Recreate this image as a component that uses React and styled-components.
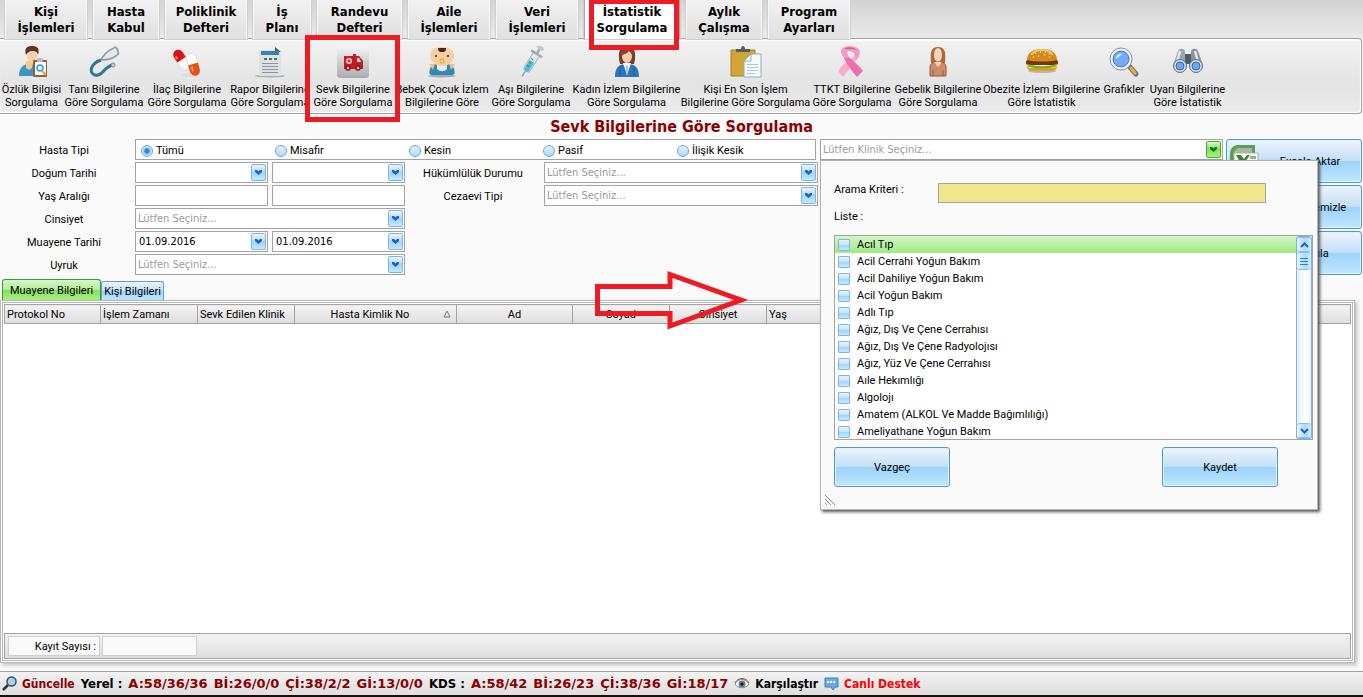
import { useState } from 'react'
import styled, { createGlobalStyle, css } from 'styled-components'

const Global = createGlobalStyle`
* {
box-sizing: border-box;
}
body {
margin: 0;
background: #fafafa;
color: #000;
font-family: Roboto, Tahoma, sans-serif;
font-size: 11px;
}
button, input, select {
font: inherit;
color: inherit;
margin: 0;
padding: 0;
}
`

const wideFont = '"DejaVu Sans Condensed", "DejaVu Sans", Tahoma, sans-serif'

const blueGlass = css`
background: linear-gradient(#eef3fb, #c3dff8 49%, #9cd2fb 51%, #bfe8ff);
`

const Page = styled.div`
position: relative;
display: flex;
flex-direction: column;
min-height: 100vh;
`

/* top tabs */
const TabBar = styled.nav`
display: flex;
align-items: stretch;
gap: 6px;
height: 39px;
padding: 0 5px;
background: linear-gradient(#d3d3d3, #eaeaea);
`
const MainTab = styled.button`
position: relative;
width: ${p => p.$width}px;
border: 1px solid ${p => p.$active ? '#a8a8a8' : '#f6f6f6'};
border-top: none;
border-bottom: none;
outline: 1px solid #cfcfcf;
background: ${p => p.$active ? '#fff' : 'linear-gradient(#f2f2f2, #dfdfdf)'};
font-family: ${wideFont};
font-size: 13px;
font-weight: bold;
line-height: 16px;
text-align: center;
white-space: pre-line;
z-index: ${p => p.$active ? 2 : 0};
`
const RedFrame = styled.span`
position: absolute;
inset: ${p => p.$inset};
border: 5px solid #ed1c24;
pointer-events: none;
z-index: 3;
`

/* icon ribbon */
const Ribbon = styled.div`
display: flex;
gap: 7px;
height: 76px;
margin: -1px 1px 0 0;
padding: 7px 4px 0;
border: 1px solid #a0a0a0;
border-left: none;
border-radius: 0 4px 4px 0;
box-shadow: inset 0 2px 1px #fff, inset -1px -1px 1px #fff;
background: linear-gradient(#f2f2f2, #e4e4e4 60%, #ebebeb);
`
const RibbonButton = styled.button`
position: relative;
display: flex;
flex-direction: column;
align-items: center;
gap: 5px;
width: ${p => p.$width}px;
border: none;
background: none;
line-height: 13px;
white-space: pre;
svg {
flex: none;
}
`

/* filter form */
const Title = styled.h1`
margin: 0;
padding-top: 4px;
height: 25px;
color: #8b0000;
font-family: ${wideFont};
font-size: 16px;
line-height: 18px;
text-align: center;
`
const Filters = styled.form`
display: flex;
align-items: flex-start;
gap: 3px;
height: 139px;
padding-right: 1px;
`
const Fields = styled.div`
display: grid;
grid-template-columns: 131px 133px 133px 131px 274px;
grid-auto-rows: 21px;
column-gap: 4px;
row-gap: 2px;
margin-right: -1px;
`
const Label = styled.label`
display: flex;
align-items: center;
justify-content: center;
padding: 2px 3px 0 0;
grid-column: ${p => p.$col || 1};
`
const Box = styled.div`
display: flex;
align-items: center;
grid-column: ${p => p.$span || 'auto'};
min-width: 0;
height: 21px;
padding-right: 1px;
border: 1px solid #a3a3a3;
background: #fff;
`
const RadioGroup = styled(Box)`
margin-right: 2px;
label {
display: flex;
align-items: center;
gap: 3px;
width: 134px;
padding: 2px 0 0 5px;
}
`
const Radio = styled.input`
appearance: none;
width: 12px;
height: 12px;
border: 1px solid #6aa5e0;
border-radius: 50%;
background: linear-gradient(#e3effb, #aedcff);
&:checked {
background: radial-gradient(#2f86d8 0 2px, #8fc4f2 3px, #e0f0fd 5px);
}
`
const TextInput = styled.input`
flex: 1;
min-width: 0;
width: 100%;
height: 19px;
padding: 0 3px;
border: none;
background: transparent;
font-family: ${wideFont};
outline: none;
`
const Select = styled.select`
flex: 1;
min-width: 0;
height: 19px;
padding: 0 2px;
border: none;
background: transparent;
appearance: none;
font-family: ${wideFont};
outline: none;
color: #9a9a9a;
`
const DropButton = styled.button`
display: flex;
align-items: center;
justify-content: center;
flex: none;
width: 15px;
height: 17px;
border: 1px solid ${p => p.$green ? '#3fae2a' : '#7db4ea'};
border-radius: 2px;
background: ${p => p.$green ? 'linear-gradient(#dcf8cf, #7fe05a 50%, #a5f47c)' : 'linear-gradient(#eef5fd, #a3d5fc 55%, #c4ebff)'};
`
const Clinic = styled.div`
position: relative;
flex: 1;
`
const Actions = styled.div`
display: flex;
flex-direction: column;
gap: 2px;
width: 136px;
`
const GlassButton = styled.button`
display: flex;
align-items: center;
justify-content: center;
width: ${p => p.$width || '100%'};
height: ${p => p.$height || 44}px;
border: 1px solid #4f96dc;
border-radius: 3px;
box-shadow: inset 0 0 0 1px #e2f3ff;
${blueGlass}
`
const ActionButton = styled(GlassButton)`
justify-content: flex-start;
padding-left: 3px;
span {
flex: 1;
text-align: center;
}
`

/* clinic drop down */
const Popup = styled.div`
position: absolute;
top: 21px;
left: 0;
width: 498px;
height: 350px;
padding: 22px 4px 0 13px;
border: 1px solid #b5b5b5;
background: #fafafa;
box-shadow: 2px 2px 3px #555;
z-index: 5;
`
const SearchRow = styled.div`
display: flex;
label {
width: 104px;
}
`
const SearchInput = styled.input`
width: 328px;
height: 20px;
border: 1px solid #a3a3a3;
background: #f0e68c;
`
const ListTitle = styled.div`
height: 32px;
padding-top: 7px;
line-height: 13px;
`
const ListFrame = styled.div`
display: flex;
height: 205px;
border: 1px solid #a3a3a3;
background: #fff;
`
const ClinicList = styled.ul`
flex: 1;
margin: 0;
padding: 0;
list-style: none;
overflow: hidden;
`
const ClinicItem = styled.li`
label {
display: flex;
align-items: center;
gap: 7px;
height: 17px;
padding-left: 3px;
background: ${p => p.$active ? 'linear-gradient(#d5f6c8, #a1e980)' : 'none'};
}
`
const Check = styled.input`
appearance: none;
width: 12px;
height: 12px;
border: 1px solid #7fb4e8;
border-radius: 1px;
background: linear-gradient(#eaf3fc, #c5e3fb 50%, #9fd7fe 55%, #c4ebff);
`
const ScrollBar = styled.div`
display: flex;
flex-direction: column;
width: 16px;
border: 1px solid #7db4ea;
border-radius: 2px;
background: linear-gradient(90deg, #e0eefb, #fff 60%, #edf6fe);
`
const ScrollPart = styled.button`
display: flex;
align-items: center;
justify-content: center;
height: ${p => p.$height}px;
margin-top: ${p => p.$push ? 'auto' : '0'};
border: 1px solid #8cbdf0;
border-width: 1px 0;
border-radius: 3px;
background: linear-gradient(90deg, #eef6fe, #a9dafe 60%, #d2efff);
`
const PopupButtons = styled.div`
display: flex;
justify-content: space-between;
padding: 7px 35px 7px 0;
`
const Grip = styled.svg`
display: block;
margin-left: -10px;
`

/* result grid */
const GridTabs = styled.div`
display: flex;
align-items: flex-end;
height: 22px;
padding-left: 2px;
`
const GridTab = styled.button`
height: ${p => p.$active ? 21 : 19}px;
width: ${p => p.$active ? 99 : 63}px;
border: 1px solid ${p => p.$active ? '#2fa32a' : '#5a9fe0'};
border-bottom: none;
border-radius: 3px 3px 0 0;
white-space: nowrap;
${p => p.$active ? css`background: linear-gradient(#d8f5ca, #b3ec99 49%, #83de5d 51%, #a8f480);` : blueGlass}
`
const GridPanel = styled.section`
display: flex;
flex-direction: column;
flex: 1;
margin: 0 8px 8px 0;
padding: 1px;
border: 1px solid #b8b8b8;
box-shadow: 2px 2px 4px #bbb;
background: #fff;
`
const GridInner = styled.div`
display: flex;
flex-direction: column;
flex: 1;
padding: 1px;
border: 1px solid #b8b8b8;
`
const Table = styled.table`
width: 100%;
table-layout: fixed;
border-collapse: collapse;
th {
height: 19px;
padding: 0 2px;
border: 1px solid #a3a3a3;
background: linear-gradient(#f3f3f3, #dedede);
font-weight: normal;
text-align: center;
line-height: 15px;
white-space: nowrap;
}
th.left {
text-align: left;
}
`
const SortHead = styled.span`
display: flex;
align-items: center;
span {
flex: 1;
}
svg {
margin-right: 3px;
}
`
const GridFooter = styled.div`
display: flex;
gap: 2px;
height: 26px;
margin-top: auto;
padding: 2px 3px;
border: 1px solid #a3a3a3;
background: linear-gradient(#f3f3f3, #dedede);
`
const FooterCell = styled.div`
width: ${p => p.$width}px;
height: 20px;
padding: 0 3px 0 0;
border: 1px solid #cfcfcf;
background: #f9f9f9;
line-height: 19px;
text-align: right;
`

/* status bar */
const StatusBar = styled.footer`
display: flex;
align-items: center;
gap: 6px;
height: 26px;
padding: 0 2px;
border-top: 1px solid #a0a0a0;
border-bottom: 2px solid #1a0f08;
background: linear-gradient(#f3f3f3, #dedede);
color: #8b0000;
font-family: ${wideFont};
font-size: 12px;
font-weight: bold;
white-space: nowrap;
`
const StatusLink = styled.a`
display: flex;
align-items: center;
gap: 5px;
color: ${p => p.$color};
text-decoration: none;
`
const Dark = styled.span`
color: #000;
font-size: 13px;
`
const Count = styled.span`
font-family: "DejaVu Sans", Verdana, sans-serif;
font-size: 13px;
`
const BigArrow = styled.svg`
position: absolute;
left: 590px;
top: 266px;
z-index: 6;
pointer-events: none;
`

const Chevron = ({ color = '#1b62c4' }) => (
    <svg width="7" height="5" viewBox="0 0 7 5"><path d="M0 0h2l1.500 1.500L5 0h2v2L3.500 5 0 2z" fill={color} /></svg>
)

const icons = {
    patient: <>
        <path d="M3 30c0-8 4-12 10-12s9 4 9 12z" fill="#3f93c4" />
        <path d="M10 15h7l-1 7-3 2-3-2z" fill="#f3c79b" />
        <ellipse cx="16" cy="9" rx="5" ry="7" fill="#f6cfa5" />
        <path d="M10 9C8 2 11 0 16 0c5 0 8 2 6 9-1-3-2-4-5-4-4 0-5 1-7 4z" fill="#5b3423" />
        <rect x="17" y="14" width="14" height="17" rx="1" fill="#8b6239" />
        <path d="M19 16h11v13H19z" fill="#f7fbff" />
        <rect x="21" y="12" width="6" height="4" rx="1" fill="#b9bec4" />
        <circle cx="24" cy="22" r="3" fill="#d9f2ff" stroke="#2ea3dc" strokeWidth="1.5" />
        <path d="m26 25 4 4" stroke="#f39a2d" strokeWidth="2" />
    </>,
    stethoscope: <>
        <path d="M13 14 25 2c3-2 7 4 4 8-4 3-9 4-16 4z" fill="#e4e8ea" />
        <path d="M13 14C3 17 0 27 7 29c7 2 8-7 17-10" fill="none" stroke="#2d7795" strokeWidth="3" />
        <path d="M13 14C16 8 21 4 26 2M13 14c6 0 13-1 17-6" fill="none" stroke="#8c989f" strokeWidth="1.5" />
        <path d="M26 1c3 0 5 4 4 8" fill="none" stroke="#98a3aa" strokeWidth="2" />
        <circle cx="25" cy="19" r="2" fill="#c6ced3" stroke="#7b878d" />
    </>,
    pills: <>
        <ellipse cx="20" cy="29" rx="9" ry="2" fill="#ddd" />
        <g transform="rotate(-33 10 13)"><rect x="5" y="3" width="10" height="22" rx="5" fill="#fafafa" stroke="#ddd" /><path d="M5 14V8a5 5 0 0 1 10 0v6z" fill="#dd1111" /><path d="M7 11V8" stroke="#ff8a80" strokeWidth="2" /></g>
        <g transform="rotate(-16 22 18)"><rect x="17" y="7" width="10" height="23" rx="5" fill="#fff" stroke="#ddd" /><path d="M17 18v7a5 5 0 0 0 10 0v-7z" fill="#e94e12" /><path d="M20 20v5" stroke="#ff9b66" strokeWidth="2" /></g>
    </>,
    report: <>
        <ellipse cx="16" cy="30" rx="15" ry="1.5" fill="#aaa" />
        <path d="M5 4h16l6 4v22H5z" fill="#dde1e3" />
        <path d="M21 1v5h6z" fill="#4f5b62" />
        <path d="M7 5h18v4H7z" fill="#3683ad" />
        <path d="M10 13h3m2 0h3m2 0h3" stroke="#59656c" strokeWidth="2" />
        <path d="M8 17.500h16M8 20.500h16M8 23.500h16M8 26.500h16" stroke="#8b969c" />
    </>,
    ambulance: <>
        <defs><linearGradient id="amb" x2="0" y2="1"><stop stopColor="#f5f5f5" /><stop offset="1" stopColor="#a9abae" /></linearGradient></defs>
        <rect x="0" y="0" width="32" height="32" rx="3" fill="url(#amb)" />
        <path d="M7 10h9V8h3v2h3l4 5v8H7z" fill="#c11d22" />
        <path d="M20 12h2l2 4h-4z" fill="#f6dcdc" />
        <circle cx="12" cy="15" r="3" fill="#f3d9d9" /><path d="M10 15h4m-2-2v4" stroke="#c11d22" />
        <circle cx="11" cy="22" r="2" fill="#e8c9c9" stroke="#8e1115" strokeWidth="1.5" />
        <circle cx="21" cy="22" r="2" fill="#e8c9c9" stroke="#8e1115" strokeWidth="1.5" />
    </>,
    baby: <>
        <ellipse cx="16" cy="30" rx="14" ry="1.5" fill="#aaa" />
        <path d="M6 29c-5 0-2-8 1-11h18c3 3 6 11 1 11z" fill="#2f8ab8" />
        <path d="M3 18h6l-2 6zM29 18h-6l2 6z" fill="#f1bb8c" />
        <path d="M11 18h10v5c-3 3-7 3-10 0z" fill="#dff0fa" />
        <path d="M4 10C4 4 9 1 16 1s12 3 12 9c0 6-6 10-12 10S4 16 4 10z" fill="#f8cfa2" />
        <path d="M12 2h8c0 4-2 4-4 4s-4 0-4-4z" fill="#43291e" />
        <circle cx="10" cy="10" r="1" fill="#2e2a2a" /><circle cx="22" cy="10" r="1" fill="#2e2a2a" />
        <circle cx="16" cy="15" r="2.5" fill="#f3a72b" /><circle cx="16" cy="15" r="1" fill="#fff" />
    </>,
    syringe: <g transform="rotate(32 16 16)">
        <path d="M16 27v6" stroke="#7ca5b3" strokeWidth="1.5" />
        <rect x="13" y="6" width="7" height="20" rx="2" fill="#e6ecee" stroke="#a9b5b9" />
        <path d="M14 15h5v10l-2 2h-1l-2-2z" fill="#46bfd4" />
        <path d="M14 13h3M14 17h3M14 21h3" stroke="#587a84" />
        <path d="M10 6h13M16.500 6V0" stroke="#a0aaae" strokeWidth="2.5" />
        <ellipse cx="16.500" cy="-1" rx="4" ry="2" fill="#c2cacd" />
    </g>,
    woman: <>
        <path d="M9 18C6 6 9 0 16 0s10 6 7 18z" fill="#7d3a26" />
        <ellipse cx="16" cy="10" rx="5" ry="7" fill="#f5cdb2" />
        <path d="M10 10c0-7 4-8 7-8 4 1 5 3 5 8-1-2-3-4-4-5-2 3-5 3-8 5z" fill="#8b432b" />
        <path d="M4 31c0-9 3-13 12-13s12 4 12 13z" fill="#2e74bd" />
        <path d="M12 17h8l-4 12z" fill="#fff" /><path d="m15 20 1-1 1 1v7l-1 3-1-3z" fill="#9fc8ee" />
        <path d="M9 20v10M23 20v10" stroke="#235c9b" />
    </>,
    clipboard: <>
        <path d="M1 4h24v26H1z" fill="#d2a436" stroke="#a87e1e" />
        <path d="M6 6V3h5c0-4 4-4 4 0h5v3z" fill="#565a5e" />
        <path d="M14 15l7-7h10v23H14z" fill="#f4f9fd" stroke="#8eabc4" />
        <path d="M14 15l7-7v7z" fill="#fff" stroke="#8eabc4" />
        <path d="M17 18.500h11M17 21.500h11M17 24.500h11M17 27.500h8" stroke="#a9c8e2" />
    </>,
    ribbon: <>
        <path d="M21 7c1 6-6 14-14 24L2 25C9 16 15 12 21 7z" fill="#fbaccb" />
        <path d="M7 7c1 8 6 14 14 24l6-6C20 16 13 12 12 8z" fill="#ef6fae" />
        <path d="M6 9C3 4 7 0 14 0s12 4 9 10c-1 2-2 4-4 5 1-5 0-9-5-9-3 0-3 2-1 6-4 0-6-1-7-3z" fill="#f39ac3" />
        <path d="M8 3c4-3 10-2 13 1-4-1-8-1-13-1z" fill="#d8649b" />
        <path d="M11 6c2-2 5-1 7 1 0 2-1 4-3 6-2-2-4-4-4-7z" fill="#eee" />
    </>,
    mother: <>
        <path d="M9 17C8 6 9 1 16 1s8 5 7 16z" fill="#b06a35" />
        <ellipse cx="16" cy="9" rx="4" ry="7" fill="#f3d3bc" />
        <path d="M8 30V21c0-4 4-5 8-5s8 1 8 5v9z" fill="#cd8d6c" stroke="#965a3e" />
        <path d="m12 16 4 5 4-5z" fill="#f3d3bc" /><path d="M11 24v6m10-6v6" stroke="#965a3e" />
    </>,
    burger: <>
        <ellipse cx="16" cy="25" rx="14" ry="2" fill="#b9b9b9" />
        <path d="M1 20h30c0 4-3 5-6 5H7c-3 0-6-1-6-5z" fill="#dda02b" />
        <rect x="0" y="14" width="32" height="5" rx="2" fill="#7a3211" />
        <path d="M0 18c6 3 26 3 32 0l-3 4H3z" fill="#f7dc4a" />
        <path d="M2 19c6 3 22 3 28 0" stroke="#74b01d" strokeWidth="2" fill="none" />
        <path d="M1 14C1 6 8 3 16 3s15 3 15 11c-6 2-24 2-30 0z" fill="#d3891c" />
        <path d="M5 9C8 5 12 4 16 4s8 1 11 5" stroke="#f2c263" strokeWidth="2" fill="none" />
        <path d="M9 7h1m4-1h1m4 0h1m3 2h1M12 10h1m5-1h1M7 11h1m15 0h1" stroke="#fff2c0" strokeWidth="1.500" />
    </>,
    magnifier: <>
        <path d="m21 20 7 8" stroke="#74706e" strokeWidth="5" strokeLinecap="round" />
        <path d="m23 22 4 5" stroke="#f1a84c" strokeWidth="3" strokeLinecap="round" />
        <circle cx="13" cy="13" r="11" fill="#f4f7fb" stroke="#7b8fb4" />
        <circle cx="13" cy="13" r="8" fill="#76a9ef" stroke="#5278bf" />
        <path d="M8 13c0-4 3-6 7-5-3 1-4 3-7 5z" fill="#dceaff" />
    </>,
    binoculars: <>
        <path d="M6 5c1-3 6-3 7 0v14H1z" fill="#9ba5b2" /><path d="M26 5c-1-3-6-3-7 0v14h12z" fill="#8792a1" />
        <path d="M8 5 5 16M23 5l3 11" stroke="#e4e8ed" strokeWidth="2.500" />
        <path d="M13 8h6v10h-6z" fill="#525c69" />
        <circle cx="8" cy="20" r="6.500" fill="#d5dbe3" stroke="#5c6b80" /><circle cx="24" cy="20" r="6.500" fill="#d5dbe3" stroke="#5c6b80" />
        <circle cx="8" cy="20" r="4" fill="#69a7ee" stroke="#3768ab" /><circle cx="24" cy="20" r="4" fill="#69a7ee" stroke="#3768ab" />
    </>
}

const mainTabs = [
    { text: 'Kişi\nİşlemleri', width: 82 },
    { text: 'Hasta\nKabul', width: 66 },
    { text: 'Poliklinik\nDefteri', width: 82 },
    { text: 'İş\nPlanı', width: 58 },
    { text: 'Randevu\nDefteri', width: 85 },
    { text: 'Aile\nİşlemleri', width: 82 },
    { text: 'Veri\nİşlemleri', width: 82 },
    { text: 'İstatistik\nSorgulama', width: 96, active: true },
    { text: 'Aylık\nÇalışma', width: 76 },
    { text: 'Program\nAyarları', width: 82 }
]

const ribbonItems = [
    { icon: 'patient', text: 'Özlük Bilgisi\nSorgulama', width: 55 },
    { icon: 'stethoscope', text: 'Tanı Bilgilerine\nGöre Sorgulama', width: 76 },
    { icon: 'pills', text: 'İlaç Bilgilerine\nGöre Sorgulama', width: 76 },
    { icon: 'report', text: 'Rapor Bilgilerine\nGöre Sorgulama', width: 76 },
    { icon: 'ambulance', text: 'Sevk Bilgilerine\nGöre Sorgulama', width: 76, framed: true },
    { icon: 'baby', text: 'Bebek Çocuk İzlem\nBilgilerine Göre', width: 88 },
    { icon: 'syringe', text: 'Aşı Bilgilerine\nGöre Sorgulama', width: 76 },
    { icon: 'woman', text: 'Kadın İzlem Bilgilerine\nGöre Sorgulama', width: 101 },
    { icon: 'clipboard', text: 'Kişi En Son İşlem\nBilgilerine Göre Sorgulama', width: 123 },
    { icon: 'ribbon', text: 'TTKT Bilgilerine\nGöre Sorgulama', width: 76 },
    { icon: 'mother', text: 'Gebelik Bilgilerine\nGöre Sorgulama', width: 82 },
    { icon: 'burger', text: 'Obezite İzlem Bilgilerine\nGöre İstatistik', width: 111 },
    { icon: 'magnifier', text: 'Grafikler', width: 40 },
    { icon: 'binoculars', text: 'Uyarı Bilgilerine\nGöre İstatistik', width: 73 }
]

const clinics = [
    'Acıl Tıp', 'Acil Cerrahi Yoğun Bakım', 'Acil Dahiliye Yoğun Bakım', 'Acil Yoğun Bakım', 'Adlı Tıp',
    'Ağız, Dış Ve Çene Cerrahısı', 'Ağız, Dış Ve Çene Radyolojısı', 'Ağız, Yüz Ve Çene Cerrahısı',
    'Aıle Hekımlığı', 'Algolojı', 'Amatem (ALKOL Ve Madde Bağımlılığı)', 'Ameliyathane Yoğun Bakım'
]

const patientTypes = ['Tümü', 'Misafir', 'Kesin', 'Pasif', 'İlişik Kesik']

const DropList = ({ id, span, text = 'Lütfen Seçiniz...', green }) => (
    <Box $span={span}>
        <Select id={id} aria-label={text}><option>{text}</option></Select>
        <DropButton type="button" $green={green} aria-label="Aç"><Chevron color={green ? '#17751a' : undefined} /></DropButton>
    </Box>
)

const DateField = ({ id, label, value }) => (
    <Box>
        <TextInput id={id} aria-label={label} defaultValue={value} />
        <DropButton type="button" aria-label="Takvim"><Chevron /></DropButton>
    </Box>
)

const ClinicPopup = () => (
    <Popup>
        <SearchRow>
            <label htmlFor="arama">Arama Kriteri :</label>
            <SearchInput id="arama" />
        </SearchRow>
        <ListTitle>Liste :</ListTitle>
        <ListFrame>
            <ClinicList>
                {clinics.map((name, i) => (
                    <ClinicItem key={name} $active={i === 0}>
                        <label><Check type="checkbox" />{name}</label>
                    </ClinicItem>
                ))}
            </ClinicList>
            <ScrollBar>
                <ScrollPart type="button" $height={15} aria-label="Yukarı">
                    <svg width="9" height="6"><path d="M1 5 4.500 1.500 8 5" fill="none" stroke="#1b62c4" strokeWidth="2" /></svg>
                </ScrollPart>
                <ScrollPart type="button" $height={18} aria-label="Kaydır">
                    <svg width="8" height="8"><path d="M0 1.500h8M0 4.500h8M0 7.500h8" stroke="#2f7fd6" /></svg>
                </ScrollPart>
                <ScrollPart type="button" $height={15} $push aria-label="Aşağı">
                    <svg width="9" height="6"><path d="M1 1 4.500 4.500 8 1" fill="none" stroke="#1b62c4" strokeWidth="2" /></svg>
                </ScrollPart>
            </ScrollBar>
        </ListFrame>
        <PopupButtons>
            <GlassButton type="button" $width="116px" $height={40}>Vazgeç</GlassButton>
            <GlassButton type="button" $width="116px" $height={40}>Kaydet</GlassButton>
        </PopupButtons>
        <Grip width="12" height="12"><path d="M1 1l10 10M1 5l6 6M1 9l2 2" stroke="#888" /></Grip>
    </Popup>
)

const App = () => {
    const [type, setType] = useState('Tümü')

    return (
        <Page>
            <Global />
            <TabBar>
                {mainTabs.map(tab => (
                    <MainTab key={tab.text} $width={tab.width} $active={tab.active}>
                        {tab.text}
                        {tab.active && <RedFrame $inset="-1px 0 -11px 4px" />}
                    </MainTab>
                ))}
            </TabBar>
            <Ribbon>
                {ribbonItems.map(item => (
                    <RibbonButton key={item.text} $width={item.width}>
                        <svg width="32" height="32" viewBox="0 0 32 32">{icons[item.icon]}</svg>
                        {item.text}
                        {item.framed && <RedFrame $inset="-11px -9px -9px -10px" />}
                    </RibbonButton>
                ))}
            </Ribbon>

            <Title>Sevk Bilgilerine Göre Sorgulama</Title>
            <Filters>
                <Fields>
                    <Label as="span">Hasta Tipi</Label>
                    <RadioGroup $span="2 / 6">
                        {patientTypes.map(name => (
                            <label key={name}>
                                <Radio type="radio" name="hastaTipi" checked={type === name} onChange={() => setType(name)} />
                                {name}
                            </label>
                        ))}
                    </RadioGroup>

                    <Label htmlFor="dogum">Doğum Tarihi</Label>
                    <DateField id="dogum" />
                    <DateField label="Doğum Tarihi bitiş" />
                    <Label $col="4" htmlFor="hukum">Hükümlülük Durumu</Label>
                    <DropList id="hukum" />

                    <Label htmlFor="yas">Yaş Aralığı</Label>
                    <Box><TextInput id="yas" /></Box>
                    <Box><TextInput aria-label="Yaş bitiş" /></Box>
                    <Label $col="4" htmlFor="cezaevi">Cezaevi Tipi</Label>
                    <DropList id="cezaevi" />

                    <Label htmlFor="cinsiyet">Cinsiyet</Label>
                    <DropList id="cinsiyet" span="2 / 4" />

                    <Label htmlFor="muayene">Muayene Tarihi</Label>
                    <DateField id="muayene" value="01.09.2016" />
                    <DateField label="Muayene Tarihi bitiş" value="01.09.2016" />

                    <Label htmlFor="uyruk">Uyruk</Label>
                    <DropList id="uyruk" span="2 / 4" />
                </Fields>
                <Clinic>
                    <DropList text="Lütfen Klinik Seçiniz..." green />
                    <ClinicPopup />
                </Clinic>
                <Actions>
                    <ActionButton type="button">
                        <svg width="29" height="32" viewBox="0 0 29 32">
                            <path d="M8 0h17v29H0V9c0-5 3-9 8-9z" fill="#5d9e55" />
                            <path d="M9 3h13v7H3c1-4 3-7 6-7z" fill="#a9b5a6" />
                            <path d="M4 8h24v21H4z" fill="#fff" stroke="#9fb79b" />
                            <path d="M6 10h5l3 4 3-4h3l-5 7 5 8h-5l-3-5-3 5H5l5-8z" fill="#3d8137" />
                            <path d="M20 11h6v3h-6z" fill="#8fb78a" />
                        </svg>
                        <span>Excele Aktar</span>
                    </ActionButton>
                    <ActionButton type="button">
                        <svg width="29" height="32" /><span>Formu Temizle</span>
                    </ActionButton>
                    <ActionButton type="button">
                        <svg width="29" height="32" /><span>Sorgula</span>
                    </ActionButton>
                </Actions>
            </Filters>

            <GridTabs>
                <GridTab $active>Muayene Bilgileri</GridTab>
                <GridTab>Kişi Bilgileri</GridTab>
            </GridTabs>
            <GridPanel>
                <GridInner>
                    <Table>
                        <colgroup>
                            <col width="96" /><col width="97" /><col width="97" /><col width="162" /><col width="116" />
                            <col width="97" /><col width="97" /><col width="97" /><col />
                        </colgroup>
                        <thead>
                            <tr>
                                <th className="left">Protokol No</th>
                                <th className="left">İşlem Zamanı</th>
                                <th className="left">Sevk Edilen Klinik</th>
                                <th>
                                    <SortHead>
                                        <span>Hasta Kimlik No</span>
                                        <svg width="8" height="8"><path d="M4 1 7 7H1z" fill="none" stroke="#777" /></svg>
                                    </SortHead>
                                </th>
                                <th>Ad</th>
                                <th>Soyad</th>
                                <th>Cinsiyet</th>
                                <th className="left">Yaş</th>
                                <th />
                            </tr>
                        </thead>
                        <tbody />
                    </Table>
                    <GridFooter>
                        <FooterCell $width={92}>Kayıt Sayısı :</FooterCell>
                        <FooterCell $width={95} />
                    </GridFooter>
                </GridInner>
            </GridPanel>

            <StatusBar>
                <StatusLink href="#guncelle" $color="#8b0000">
                    <svg width="15" height="15" viewBox="0 0 15 15"><path d="m1 14 5-5" stroke="#333" strokeWidth="2.500" /><circle cx="9.500" cy="5.500" r="4.500" fill="#a8d0f2" stroke="#3d4d5e" strokeWidth="1.500" /></svg>
                    Güncelle
                </StatusLink>
                <Dark>Yerel :</Dark>
                <Count>A:58/36/36</Count>
                <Count>Bİ:26/0/0</Count>
                <Count>Çİ:38/2/2</Count>
                <Count>Gİ:13/0/0</Count>
                <Dark>KDS :</Dark>
                <Count>A:58/42</Count>
                <Count>Bİ:26/23</Count>
                <Count>Çİ:38/36</Count>
                <Count>Gİ:18/17</Count>
                <StatusLink href="#karsilastir" $color="#000">
                    <svg width="16" height="12" viewBox="0 0 16 12"><path d="M1 6c3-6 11-6 14 0-3 5-11 5-14 0z" fill="#fff" stroke="#a08a78" /><path d="M1 5C4-1 12-1 15 5" fill="none" stroke="#8a5c40" /><circle cx="8" cy="6" r="3.500" fill="#5d7f98" /><circle cx="8" cy="6" r="1.500" fill="#111" /></svg>
                    Karşılaştır
                </StatusLink>
                <StatusLink href="#destek" $color="#ff0000">
                    <svg width="15" height="14" viewBox="0 0 15 14"><path d="M1 1h13v9h-3l-2 3-2-3H1z" fill="#69ace0" stroke="#3f7fb8" /><path d="M3 5h2m1 0h2m1 0h2" stroke="#fff" strokeWidth="2" /></svg>
                    Canlı Destek
                </StatusLink>
            </StatusBar>

            <BigArrow width="160" height="68" viewBox="0 0 160 68">
                <path d="M7.500 20.500H80V8.500l71 25.500-71 26V47.500H7.500z" fill="none" stroke="#ed1c24" strokeWidth="5" />
            </BigArrow>
        </Page>
    )
}

export default App
